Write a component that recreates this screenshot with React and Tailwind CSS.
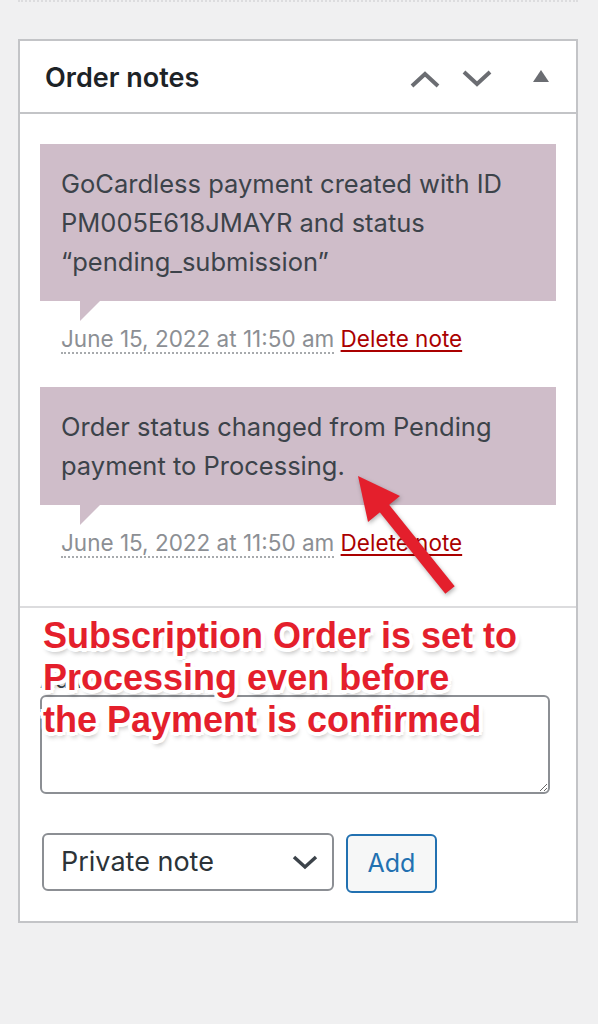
import React from 'react';

const Note = ({ children }) => (
  <li className="mb-[30px]">
    <div className="bg-[#cfbdc9] px-[21px] py-[20px] text-[25.5px] leading-[39px] text-[#3c434a]">{children}</div>
    <div className="ml-[40px] h-0 w-0 border-t-[20px] border-r-[20px] border-t-[#cfbdc9] border-r-transparent" />
    <p className="pl-[21px] text-[22.5px] leading-[36px]">
      <abbr className="text-[#8c8f94] no-underline border-b-2 border-dotted border-[#a7aaad]" title="2022-06-15 11:50:00">
        June 15, 2022 at 11:50 am
      </abbr>{' '}
      <a href="#" className="text-[#a00] underline underline-offset-[3px] decoration-[2px]">Delete note</a>
    </p>
  </li>
);

export default function App() {
  return (
    <div className="relative min-h-[1024px] bg-[#f0f0f1] pl-[18px] pr-[20px] font-['Inter',sans-serif]">
      <div className="border-t-2 border-dotted border-[#dcdcde]" />
      <div className="mt-[37px] w-[560px] border-2 border-[#c3c4c7] bg-white">
        <div className="flex h-[73px] items-center border-b-2 border-[#c3c4c7] pl-[25px] pr-[26px]">
          <h2 className="mt-[3px] flex-1 text-[27px] font-semibold text-[#1d2327]">Order notes</h2>
          <div className="flex items-center gap-[22px]">
            <svg width="30" height="18" viewBox="0 0 30 18" className="mt-[6px]">
              <path d="M2 15 L15 3 L28 15" fill="none" stroke="#6b6d72" strokeWidth="4" />
            </svg>
            <svg width="30" height="18" viewBox="0 0 30 18" className="mt-[2px]">
              <path d="M2 3 L15 15 L28 3" fill="none" stroke="#6b6d72" strokeWidth="4" />
            </svg>
            <svg width="18" height="14" viewBox="0 0 18 14" className="ml-[18px] mb-[2px]">
              <path d="M9 1 L17 13 L1 13 Z" fill="#6b6d72" />
            </svg>
          </div>
        </div>

        <ul className="px-[20px] pt-[30px] pb-[15px]">
          <Note>
            GoCardless payment created with ID PM005E618JMAYR and status “pending_submission”
          </Note>
          <Note>Order status changed from Pending payment to Processing.</Note>
        </ul>

        <div className="border-t-2 border-[#dcdcde] pl-[20px] pr-[25px] pt-[57px] pb-[28px]">
          <label className="block text-[22px] leading-[30px] text-[#3c434a]">Add note</label>
          <textarea
            rows="3"
            className="block h-[99px] w-[510px] rounded-[6px] border-2 border-[#8c8f94] bg-white"
          />
          <div className="mt-[37px] flex items-center gap-[12px] pl-[2px]">
            <div className="flex h-[58px] w-[292px] items-center rounded-[6px] border-2 border-[#8c8f94] pl-[17px] pr-[14px] text-[27px] text-[#2c3338]">
              <span className="flex-1">Private note</span>
              <svg width="26" height="16" viewBox="0 0 26 16">
                <path d="M2 3 L13 13 L24 3" fill="none" stroke="#3c434a" strokeWidth="3.5" />
              </svg>
            </div>
            <button className="mt-[3px] h-[59px] w-[91px] rounded-[6px] border-2 border-[#2271b1] bg-[#f6f7f7] text-[25px] text-[#2271b1]">
              Add
            </button>
          </div>
        </div>
      </div>

      <div className="absolute left-[43px] top-[615px] font-['Liberation_Sans',Arial,sans-serif] text-[36px] font-bold leading-[42px] text-[#e41f2c] [text-shadow:4px_0_0_#fff,-4px_0_0_#fff,0_4px_0_#fff,0_-4px_0_#fff,3px_3px_0_#fff,-3px_-3px_0_#fff,3px_-3px_0_#fff,-3px_3px_0_#fff,2px_5px_5px_rgba(0,0,0,0.3)]">
        Subscription Order is set to<br />
        Processing even before<br />
        the Payment is confirmed
      </div>

      <svg className="absolute left-0 top-0" width="598" height="1024" viewBox="0 0 598 1024">
        <g style={{ filter: 'drop-shadow(1px 2px 2px rgba(0,0,0,0.3))' }}>
          <line x1="450" y1="590" x2="380" y2="503" stroke="#e41f2c" strokeWidth="12" />
          <polygon points="358,476 400,496 368,522" fill="#e41f2c" />
        </g>
      </svg>
    </div>
  );
}
